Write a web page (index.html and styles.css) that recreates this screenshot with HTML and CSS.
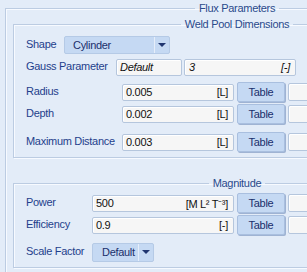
FILE: index.html
```html
<!DOCTYPE html>
<html>
<head>
<meta charset="utf-8">
<link rel="stylesheet" href="styles.css">
</head>
<body>
<fieldset class="group outer">
  <legend>Flux Parameters</legend>
  <fieldset class="group inner weld">
    <legend>Weld Pool Dimensions</legend>
    <div class="row">
      <span class="label w-shape">Shape</span>
      <div class="combo combo-shape"><span class="combo-text">Cylinder</span><span class="combo-arrow"><i></i></span></div>
    </div>
    <div class="row r-gauss">
      <span class="label w-gauss">Gauss Parameter</span>
      <div class="box box-default italic">Default</div>
      <div class="box box-three italic"><span>3</span><span>[-]</span></div>
    </div>
    <div class="row r-radius">
      <span class="label w-dim">Radius</span>
      <div class="box box-val"><span>0.005</span><span>[L]</span></div>
      <button class="btn">Table</button>
      <div class="box box-extra"></div>
    </div>
    <div class="row r-depth">
      <span class="label w-dim">Depth</span>
      <div class="box box-val"><span>0.002</span><span>[L]</span></div>
      <button class="btn">Table</button>
      <div class="box box-extra"></div>
    </div>
    <div class="row r-max">
      <span class="label w-dim">Maximum Distance</span>
      <div class="box box-val"><span>0.003</span><span>[L]</span></div>
      <button class="btn">Table</button>
      <div class="box box-extra"></div>
    </div>
  </fieldset>
  <fieldset class="group inner magnitude">
    <legend>Magnitude</legend>
    <div class="row">
      <span class="label w-mag">Power</span>
      <div class="box box-wide"><span>500</span><span>[M L² T⁻³]</span></div>
      <button class="btn">Table</button>
      <div class="box box-extra"></div>
    </div>
    <div class="row r-eff">
      <span class="label w-mag">Efficiency</span>
      <div class="box box-wide"><span>0.9</span><span>[-]</span></div>
      <button class="btn">Table</button>
      <div class="box box-extra"></div>
    </div>
    <div class="row r-scale">
      <span class="label w-mag">Scale Factor</span>
      <div class="combo combo-scale"><span class="combo-text">Default</span><span class="combo-arrow"><i></i></span></div>
    </div>
  </fieldset>
</fieldset>
</body>
</html>
```

FILE: styles.css
```css
html, body {
  margin: 0;
  padding: 0;
}
body {
  width: 307px;
  height: 272px;
  overflow: hidden;
  background-color: #e3ecf8;
  font-family: "Liberation Sans", Arial, sans-serif;
  font-size: 11px;
  letter-spacing: -0.3px;
  color: #1f3f8c;
  padding-top: 1px;
  box-sizing: border-box;
}
.group {
  margin: 0;
  border: 1px solid #bccce2;
  box-shadow: 1px 1px 0 #f7faff, inset 1px 1px 0 #f7faff;
  min-width: 0;
}
.group > legend {
  margin: 0 auto;
  padding: 0 4px;
  line-height: 14px;
  height: 14px;
  color: #2a4a8c;
}
.outer {
  width: 464px;
  box-sizing: border-box;
  margin-left: 5px;
  padding: 2px 7px 20px 7px;
}
.inner {
  padding: 4px 12px 5px 12px;
}
.magnitude {
  margin-top: 18px;
  padding-top: 3px;
}
.row {
  display: flex;
  align-items: center;
  height: 20px;
}
.r-gauss { margin-top: 2px; }
.r-radius { margin-top: 5px; }
.r-depth { margin-top: 2px; }
.r-max { margin-top: 8px; }
.r-eff { margin-top: 2px; }
.r-scale { margin-top: 7px; }
.label {
  flex: none;
  white-space: nowrap;
  margin-top: -2px;
}
.w-shape { width: 38px; }
.w-gauss { width: 90px; }
.w-dim { width: 96px; }
.w-mag { width: 66px; }
.box {
  flex: none;
  box-sizing: border-box;
  height: 17px;
  border: 1px solid #b5c6dd;
  border-radius: 2px;
  background: #f6f6f6;
  box-shadow: inset 1px 1px 0 #fff;
  color: #111;
  display: flex;
  align-items: center;
  justify-content: space-between;
  padding: 0 5px 0 3px;
  white-space: nowrap;
}
.italic { font-style: italic; }
.box-default { width: 66px; }
.box-three { width: 112px; margin-left: 2px; padding-left: 4px; }
.box-val { width: 112px; }
.box-wide { width: 142px; }
.box-extra { width: 40px; height: 18px; margin-left: 3px; }
.btn {
  flex: none;
  box-sizing: border-box;
  width: 48px;
  height: 20px;
  margin: 0 0 0 3px;
  padding: 0;
  border: 1px solid #a9bfdf;
  border-radius: 2px;
  background: #c5d9f3;
  font: inherit;
  letter-spacing: inherit;
  color: #1a2f6b;
  box-shadow: 1px 1px 0 #9fb3d3;
}
.combo {
  flex: none;
  box-sizing: border-box;
  height: 18px;
  display: flex;
  background: #c5d9f3;
  border: 1px solid #b5cae6;
  border-radius: 2px;
  color: #1a2f6b;
}
.combo-shape { width: 106px; }
.combo-scale { width: 62px; height: 19px; }
.combo-text {
  flex: 1;
  padding-left: 8px;
  line-height: 16px;
}
.combo-scale .combo-text { padding-left: 9px; }
.combo-arrow {
  flex: none;
  width: 14px;
  border-left: 1px solid #e6eefa;
  display: flex;
  align-items: center;
  justify-content: center;
}
.combo-arrow i {
  width: 0;
  height: 0;
  border-left: 4px solid transparent;
  border-right: 4px solid transparent;
  border-top: 4px solid #1f3570;
}
```
